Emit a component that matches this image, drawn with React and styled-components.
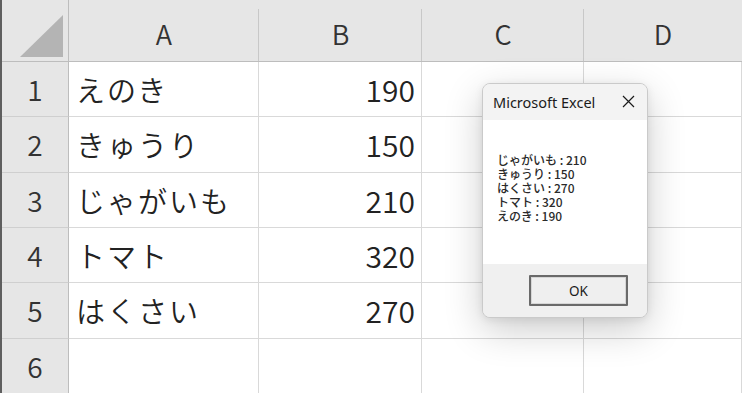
import React from "react";
import styled, { createGlobalStyle } from "styled-components";

const Global = createGlobalStyle`
  html, body {
    margin: 0;
    padding: 0;
    background: #ffffff;
    overflow: hidden;
  }
  body {
    font-family: "Noto Sans CJK JP", "Noto Sans", sans-serif;
  }
`;

const Page = styled.div`
  position: relative;
  width: 742px;
  height: 393px;
  overflow: hidden;
  background: #ffffff;
`;

const Sheet = styled.div`
  display: grid;
  grid-template-columns: 67px 190px 163px 162px 1fr;
  border-left: 2px solid #5f5f5f;
  font-family: "Noto Sans CJK JP", sans-serif;
  font-weight: 350;
`;

const Corner = styled.div`
  position: relative;
  box-sizing: border-box;
  height: 62px;
  background: #e6e6e6;
  border-bottom: 1px solid #bdbdbd;
  border-right: 1px solid #bdbdbd;

  &::before {
    content: "";
    position: absolute;
    left: 18px;
    top: 15px;
    width: 0;
    height: 0;
    border-style: solid;
    border-width: 0 0 42px 43px;
    border-color: transparent transparent #b4b4b4 transparent;
  }
`;

const ColHead = styled.div`
  position: relative;
  box-sizing: border-box;
  height: 62px;
  background: #e6e6e6;
  border-bottom: 1px solid #bdbdbd;
  display: flex;
  align-items: center;
  justify-content: center;
  padding-top: 5px;
  font-size: 27px;
  color: #333333;

  &::after {
    content: "";
    position: absolute;
    right: 0;
    top: 9px;
    bottom: 0;
    width: 1px;
    background: ${(p) => (p.$last ? "transparent" : "#c8c8c8")};
  }
`;

const RowHead = styled.div`
  box-sizing: border-box;
  height: ${(p) => p.$h}px;
  background: #e6e6e6;
  border-right: 1px solid #bdbdbd;
  border-bottom: 1px solid #cfcfcf;
  display: flex;
  align-items: center;
  justify-content: center;
  font-size: 28px;
  color: #333333;
  padding-bottom: 1px;
`;

const Cell = styled.div`
  box-sizing: border-box;
  height: ${(p) => p.$h}px;
  border-right: 1px solid #d9d9d9;
  border-bottom: 1px solid #d9d9d9;
  display: flex;
  align-items: center;
  justify-content: ${(p) => (p.$num ? "flex-end" : "flex-start")};
  padding: 0 ${(p) => (p.$num ? "6px" : "0")} 1px ${(p) => (p.$num ? "0" : "7px")};
  font-size: ${(p) => (p.$num ? "30px" : "29px")};
  letter-spacing: ${(p) => (p.$num ? "0" : "2px")};
  color: #222222;
  white-space: nowrap;
`;

const Dialog = styled.div`
  position: absolute;
  left: 482px;
  top: 83px;
  width: 166px;
  height: 235px;
  box-sizing: border-box;
  border: 1px solid #cacaca;
  border-radius: 8px;
  background: #f0f0f0;
  overflow: hidden;
  display: flex;
  flex-direction: column;
  box-shadow: 0 12px 38px rgba(0, 0, 0, 0.2), 0 2px 8px rgba(0, 0, 0, 0.08);
  font-family: "Noto Sans", "Noto Sans CJK JP", sans-serif;
`;

const TitleBar = styled.div`
  height: 36px;
  display: flex;
  align-items: center;
  justify-content: space-between;
  padding: 0 12px 0 10px;
  font-size: 14.5px;
  color: #1b1b1b;
  background: #f3f3f3;
`;

const Close = styled.svg`
  width: 13px;
  height: 13px;
  display: block;
  margin-top: -1px;
`;

const Body = styled.div`
  height: 144px;
  background: #ffffff;
  padding: 33px 0 0 14px;
  box-sizing: border-box;
  font-family: "Noto Sans CJK JP", sans-serif;
  font-weight: 500;
  font-size: 12px;
  line-height: 14px;
  color: #2a2a2a;
`;

const Line = styled.div`
  height: 14px;
  white-space: nowrap;
`;

const Footer = styled.div`
  flex: 1;
  display: flex;
  justify-content: flex-end;
  align-items: flex-start;
  padding: 11px 19px 0 0;
  background: #f0f0f0;
`;

const OkButton = styled.button`
  width: 99px;
  height: 31px;
  box-sizing: border-box;
  border: 2px solid #6a6a6a;
  box-shadow: inset 0 0 0 1px #d6d6d6;
  background: #efefef;
  border-radius: 1px;
  font-family: "Noto Sans", sans-serif;
  font-size: 13.5px;
  color: #1b1b1b;
  padding: 0;
`;

const rows = [
  { n: 1, name: "えのき", v: 190, h: 55 },
  { n: 2, name: "きゅうり", v: 150, h: 56 },
  { n: 3, name: "じゃがいも", v: 210, h: 55 },
  { n: 4, name: "トマト", v: 320, h: 55 },
  { n: 5, name: "はくさい", v: 270, h: 56 },
  { n: 6, name: "", v: "", h: 56 },
];

const message = [
  "じゃがいも : 210",
  "きゅうり : 150",
  "はくさい : 270",
  "トマト : 320",
  "えのき : 190",
];

export default function App() {
  return (
    <Page>
      <Global />
      <Sheet>
        <Corner />
        <ColHead>A</ColHead>
        <ColHead>B</ColHead>
        <ColHead>C</ColHead>
        <ColHead $last>D</ColHead>
        {rows.map((r) => (
          <React.Fragment key={r.n}>
            <RowHead $h={r.h}>{r.n}</RowHead>
            <Cell $h={r.h}>{r.name}</Cell>
            <Cell $h={r.h} $num>{r.v}</Cell>
            <Cell $h={r.h} />
            <Cell $h={r.h} />
          </React.Fragment>
        ))}
      </Sheet>
      <Dialog>
        <TitleBar>
          <span>Microsoft Excel</span>
          <Close viewBox="0 0 13 13">
            <path d="M1 1 L12 12 M12 1 L1 12" stroke="#1b1b1b" strokeWidth="1.2" fill="none" />
          </Close>
        </TitleBar>
        <Body>
          {message.map((m) => (
            <Line key={m}>{m}</Line>
          ))}
        </Body>
        <Footer>
          <OkButton>OK</OkButton>
        </Footer>
      </Dialog>
    </Page>
  );
}
